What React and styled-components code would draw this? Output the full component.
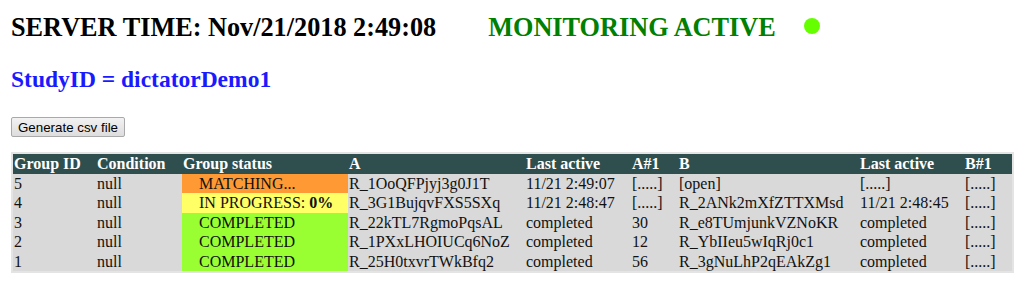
import React from "react";
import styled, { createGlobalStyle } from "styled-components";

const Global = createGlobalStyle`
  html, body { margin: 0; padding: 0; background: #fff; }
  body { font-family: "Liberation Serif", "Times New Roman", serif; font-size: 16px; color: #000; }
`;

const Page = styled.div`
  padding: 0 10px 0 11px;
`;

const TopBar = styled.div`
  display: flex;
  align-items: center;
  margin-top: 9px;
`;

const Title = styled.h1`
  margin: 0;
  font-size: 26.25px;
  font-weight: bold;
  line-height: 37px;
  color: ${(p) => p.$color || "#000"};
  margin-left: ${(p) => p.$offset || 0}px;
`;

const Dot = styled.span`
  display: inline-block;
  width: 16px;
  height: 16px;
  border-radius: 50%;
  background: #66ff00;
  margin-left: 28px;
  margin-top: -3px;
`;

const Study = styled.h2`
  margin: 19px 0 0;
  font-size: 23.5px;
  line-height: 28px;
  font-weight: bold;
  color: #1a1aff;
`;

const Button = styled.button`
  display: block;
  margin-top: 24px;
  height: 20px;
  padding: 0 6px;
  font-family: "Liberation Sans", Arial, sans-serif;
  font-size: 13.33px;
  color: #000;
  background: linear-gradient(#f2f2f2, #dddddd);
  border: 1px solid #a9a9a9;
  border-radius: 2px;
`;

const Table = styled.table`
  margin-top: 15px;
  width: 1003px;
  table-layout: fixed;
  border-collapse: separate;
  border-spacing: 0;
  border: 2px solid #e4e4e4;
  background: #d9d9d9;
`;

const Th = styled.th`
  background: #2f4f4f;
  color: #fff;
  font-weight: bold;
  text-align: left;
  padding: 1px 1px;
  line-height: 18px;
  white-space: nowrap;
  overflow: hidden;
`;

const statusColors = {
  matching: "#ff9933",
  progress: "#ffff66",
  completed: "#99ff33",
};

const Td = styled.td`
  padding: 0 1px;
  line-height: 19.4px;
  white-space: nowrap;
  overflow: hidden;
  color: #111;
`;

const StatusTd = styled(Td)`
  background: ${(p) => statusColors[p.$status]};
  padding-left: 17px;
`;

const cols = [83, 86, 166, 177, 106, 47, 181, 105, 48];
const heads = ["Group ID", "Condition", "Group status", "A", "Last active", "A#1", "B", "Last active", "B#1"];

const rows = [
  { id: 5, status: "matching", label: "MATCHING...", a: "R_1OoQFPjyj3g0J1T", la: "11/21 2:49:07", a1: "[.....]", b: "[open]", lb: "[.....]", b1: "[.....]" },
  { id: 4, status: "progress", label: "IN PROGRESS: ", pct: "0%", a: "R_3G1BujqvFXS5SXq", la: "11/21 2:48:47", a1: "[.....]", b: "R_2ANk2mXfZTTXMsd", lb: "11/21 2:48:45", b1: "[.....]" },
  { id: 3, status: "completed", label: "COMPLETED", a: "R_22kTL7RgmoPqsAL", la: "completed", a1: "30", b: "R_e8TUmjunkVZNoKR", lb: "completed", b1: "[.....]" },
  { id: 2, status: "completed", label: "COMPLETED", a: "R_1PXxLHOIUCq6NoZ", la: "completed", a1: "12", b: "R_YbIIeu5wIqRj0c1", lb: "completed", b1: "[.....]" },
  { id: 1, status: "completed", label: "COMPLETED", a: "R_25H0txvrTWkBfq2", la: "completed", a1: "56", b: "R_3gNuLhP2qEAkZg1", lb: "completed", b1: "[.....]" },
];

export default function App() {
  return (
    <>
      <Global />
      <Page>
        <TopBar>
          <Title>SERVER TIME: Nov/21/2018 2:49:08</Title>
          <Title $color="#008000" $offset={52}>MONITORING ACTIVE</Title>
          <Dot />
        </TopBar>
        <Study>StudyID = dictatorDemo1</Study>
        <Button>Generate csv file</Button>
        <Table>
          <colgroup>
            {cols.map((w, i) => (
              <col key={i} style={{ width: w }} />
            ))}
          </colgroup>
          <thead>
            <tr>
              {heads.map((h, i) => (
                <Th key={i}>{h}</Th>
              ))}
            </tr>
          </thead>
          <tbody>
            {rows.map((r) => (
              <tr key={r.id}>
                <Td>{r.id}</Td>
                <Td>null</Td>
                <StatusTd $status={r.status}>
                  {r.label}
                  {r.pct && <b>{r.pct}</b>}
                </StatusTd>
                <Td>{r.a}</Td>
                <Td>{r.la}</Td>
                <Td>{r.a1}</Td>
                <Td>{r.b}</Td>
                <Td>{r.lb}</Td>
                <Td>{r.b1}</Td>
              </tr>
            ))}
          </tbody>
        </Table>
      </Page>
    </>
  );
}
